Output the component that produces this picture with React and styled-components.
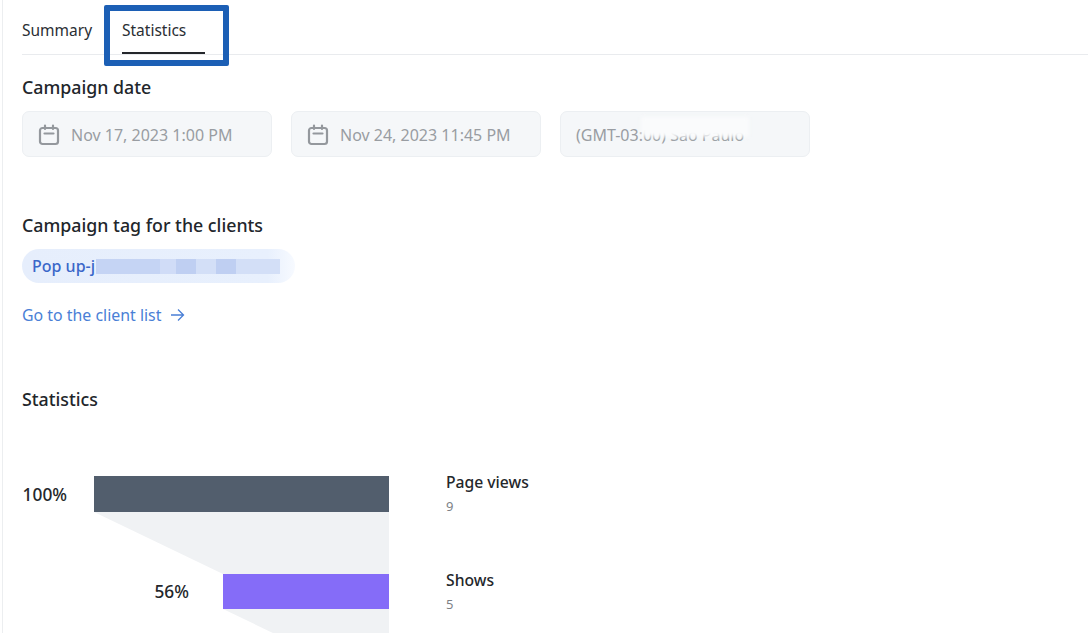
import React from "react";
import styled, { createGlobalStyle } from "styled-components";

const GlobalStyle = createGlobalStyle`
  html, body {
    margin: 0;
    padding: 0;
    background: #fff;
    overflow: hidden;
  }
  body {
    font-family: "Noto Sans", "Open Sans", "Liberation Sans", sans-serif;
    color: #1f2328;
  }
`;

const Page = styled.div`
  position: relative;
  width: 1088px;
  height: 633px;
  overflow: hidden;
  box-sizing: border-box;
  margin-left: 2px;
  border-left: 1px solid #eceef0;
  padding-left: 19px;
`;

const TabBar = styled.div`
  display: flex;
  height: 55px;
  box-sizing: border-box;
  border-bottom: 1px solid #e9ebee;
`;

const Tab = styled.div`
  box-sizing: border-box;
  height: 54px;
  width: ${(p) => p.$width}px;
  margin-right: ${(p) => p.$gap}px;
  padding-top: 18px;
  font-size: 15.5px;
  line-height: 24px;
  color: #2a2e33;
  border-bottom: 2px solid ${(p) => (p.$active ? "#24272b" : "transparent")};
`;

const Highlight = styled.div`
  position: absolute;
  left: 101px;
  top: 5px;
  width: 125px;
  height: 61px;
  box-sizing: border-box;
  border: 6px solid #1c5fb5;
  border-radius: 2px;
`;

const SectionTitle = styled.h2`
  margin: ${(p) => p.$top}px 0 0;
  font-size: 17.8px;
  line-height: 24px;
  font-weight: 500;
  color: #22262b;
`;

const DateRow = styled.div`
  display: flex;
  gap: 19px;
  margin-top: 12px;
`;

const Field = styled.div`
  box-sizing: border-box;
  position: relative;
  display: flex;
  align-items: center;
  gap: 11px;
  width: 250px;
  height: 46px;
  padding: 2px 0 0 15px;
  background: #f5f7f9;
  border: 1px solid #eceff2;
  border-radius: 7px;
  font-size: 16px;
  color: #999da2;
  white-space: nowrap;
`;

const Smudge = styled.div`
  position: absolute;
  left: 80px;
  top: 5px;
  width: 108px;
  height: 20px;
  background: #fafbfc;
  filter: blur(2px);
`;

const Pill = styled.div`
  display: flex;
  align-items: center;
  width: 273px;
  height: 34px;
  margin-top: 12px;
  box-sizing: border-box;
  padding-left: 10px;
  background: linear-gradient(90deg, #e6eefc 0%, #e8f0fd 90%, #f7faff 100%);
  border-radius: 17px;
  font-size: 16px;
  font-weight: 500;
  color: #3b67c9;
`;

const Mosaic = styled.div`
  display: flex;
  height: 15px;
  margin-left: 1px;
`;

const MosaicCell = styled.span`
  display: block;
  width: ${(p) => p.$w}px;
  background: ${(p) => p.$c};
`;

const ClientLink = styled.a`
  display: flex;
  align-items: center;
  gap: 9px;
  margin-top: 20px;
  font-size: 15.9px;
  line-height: 24px;
  color: #4a7fd6;
`;

const Funnel = styled.div`
  margin-top: 65px;
`;

const FunnelRow = styled.div`
  display: flex;
  align-items: flex-start;
  height: ${(p) => p.$h}px;
`;

const BarArea = styled.div`
  display: flex;
  justify-content: flex-end;
  align-items: center;
  width: 367px;
  height: 100%;
  margin-right: 57px;
`;

const Percent = styled.div`
  font-size: 17.3px;
  font-weight: 500;
  color: #24272b;
  margin-right: ${(p) => p.$gap}px;
`;

const Bar = styled.div`
  height: 100%;
  background: ${(p) => p.$color};
`;

const Legend = styled.div`
  margin-top: -5px;
`;

const LegendTitle = styled.div`
  font-size: 15.7px;
  line-height: 22px;
  font-weight: 500;
  color: #24272b;
`;

const LegendValue = styled.div`
  margin-top: 4px;
  font-size: 13px;
  line-height: 18px;
  color: #7d8186;
`;

const Connector = styled.svg`
  display: block;
  margin-left: 72px;
`;

function CalendarIcon() {
  return (
    <svg width="22" height="22" viewBox="0 0 22 22" fill="none" stroke="#94989d" strokeWidth="2.2">
      <rect x="2" y="4" width="18" height="16" rx="2.5" />
      <path d="M7 1.5V5M15 1.5V5M6.5 9.5H15.5" strokeLinecap="round" />
    </svg>
  );
}

function ArrowIcon() {
  return (
    <svg width="15" height="14" viewBox="0 0 15 14" fill="none" stroke="#4a7fd6" strokeWidth="1.3">
      <path d="M1 7H13.5M8 1.5L13.5 7L8 12.5" />
    </svg>
  );
}

const mosaic = [
  [64, "#c5d4f4"],
  [16, "#d0dcf7"],
  [20, "#bfcff2"],
  [20, "#d3dff7"],
  [20, "#bfcff2"],
  [44, "#d3dff7"],
];

const stages = [
  { label: "Page views", value: 9, percent: 100, color: "#525e6d", height: 36, gap: 27 },
  { label: "Shows", value: 5, percent: 56, color: "#856cf8", height: 35, gap: 34 },
];

export default function App() {
  return (
    <Page>
      <GlobalStyle />
      <TabBar>
        <Tab $width={69} $gap={31}>Summary</Tab>
        <Tab $width={83} $gap={0} $active>Statistics</Tab>
      </TabBar>
      <Highlight />

      <SectionTitle $top={20}>Campaign date</SectionTitle>
      <DateRow>
        <Field>
          <CalendarIcon />
          Nov 17, 2023 1:00 PM
        </Field>
        <Field>
          <CalendarIcon />
          Nov 24, 2023 11:45 PM
        </Field>
        <Field>
          (GMT-03:00) Sao Paulo
          <Smudge />
        </Field>
      </DateRow>

      <SectionTitle $top={56}>Campaign tag for the clients</SectionTitle>
      <Pill>
        Pop up-j
        <Mosaic>
          {mosaic.map(([w, c], i) => (
            <MosaicCell key={i} $w={w} $c={c} />
          ))}
        </Mosaic>
      </Pill>
      <ClientLink>
        Go to the client list
        <ArrowIcon />
      </ClientLink>

      <SectionTitle $top={60}>Statistics</SectionTitle>

      <Funnel>
        {stages.map((s, i) => (
          <React.Fragment key={s.label}>
            <FunnelRow $h={s.height}>
              <BarArea>
                <Percent $gap={s.gap}>{s.percent}%</Percent>
                <Bar $color={s.color} style={{ width: Math.ceil(295 * s.percent / 100) }} />
              </BarArea>
              <Legend>
                <LegendTitle>{s.label}</LegendTitle>
                <LegendValue>{s.value}</LegendValue>
              </Legend>
            </FunnelRow>
            <Connector width="295" height="62" viewBox="0 0 295 62">
              {i === 0 ? (
                <polygon points="0,0 295,0 295,62 129,62" fill="#f0f2f4" />
              ) : (
                <polygon points="129,0 295,0 295,62 258,62" fill="#f0f2f4" />
              )}
            </Connector>
          </React.Fragment>
        ))}
      </Funnel>
    </Page>
  );
}
